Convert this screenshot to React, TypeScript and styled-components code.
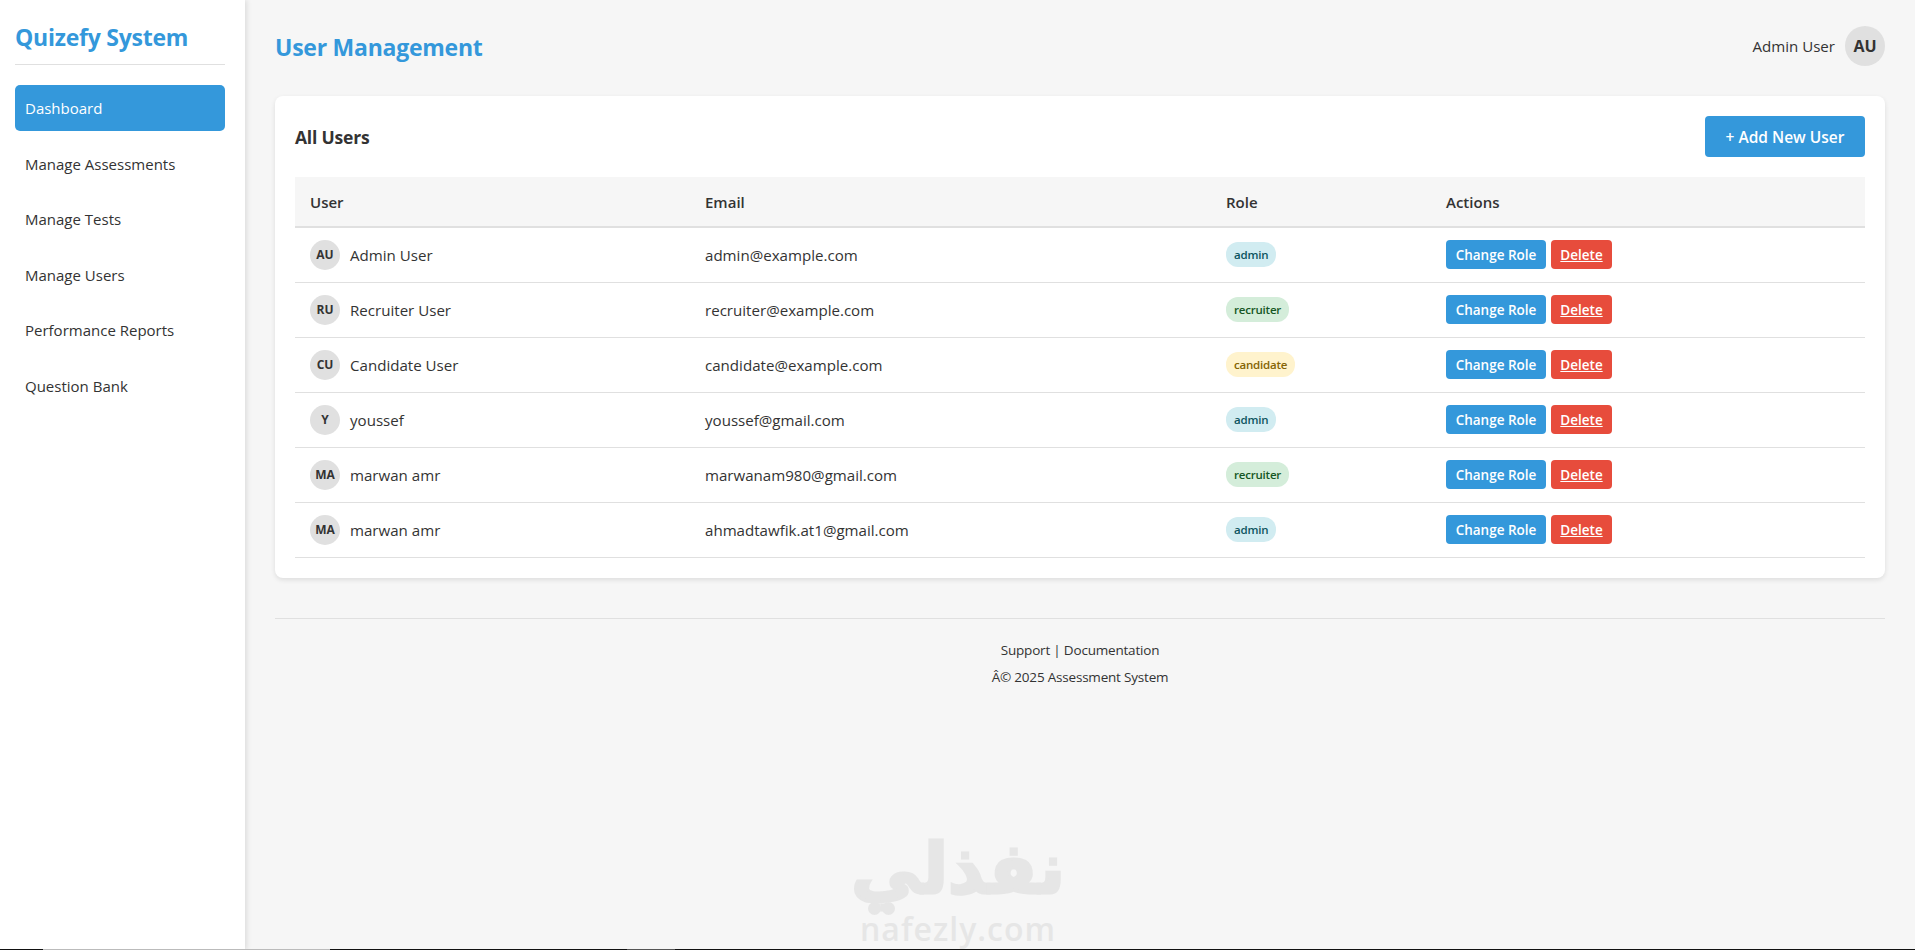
import { FC } from "react";
import styled, { createGlobalStyle } from "styled-components";

const GlobalStyle = createGlobalStyle`
  * {
    box-sizing: border-box;
  }
  html, body {
    margin: 0;
    padding: 0;
    height: 100%;
    overflow: hidden;
  }
  body {
    background: #f6f6f6;
    color: #333;
    font-family: "Open Sans", "Noto Sans", sans-serif;
  }
`;

const Page = styled.div`
  position: relative;
  display: flex;
  height: 950px;
  overflow: hidden;
`;

const Sidebar = styled.aside`
  flex: 0 0 245px;
  background: #fff;
  padding: 20px 20px 20px 15px;
  box-shadow: 2px 0 5px rgba(0, 0, 0, 0.1);
`;
const Logo = styled.div`
  height: 45px;
  margin-bottom: 20px;
  border-bottom: 1px solid #e0e0e0;
  color: #3498db;
  font-size: 23px;
  font-weight: 700;
  line-height: 34px;
  letter-spacing: -0.25px;
`;
const NavList = styled.nav`
  display: flex;
  flex-direction: column;
  gap: 9.6px;
`;
const NavItem = styled.a<{ $active?: boolean }>`
  display: flex;
  align-items: center;
  height: 46px;
  padding: 0 10px;
  border-radius: 5px;
  font-size: 15px;
  color: ${(p) => (p.$active ? "#fff" : "#333")};
  background: ${(p) => (p.$active ? "#3498db" : "transparent")};
`;

const Main = styled.main`
  flex: 1;
  padding: 26px 30px 0;
`;
const Header = styled.header`
  display: flex;
  align-items: center;
  justify-content: space-between;
  height: 40px;
  margin-bottom: 30px;
`;
const PageTitle = styled.h1`
  margin: 0;
  padding-top: 2px;
  color: #3498db;
  font-size: 23px;
  font-weight: 700;
  letter-spacing: -0.25px;
`;
const UserInfo = styled.div`
  display: flex;
  align-items: center;
  gap: 10px;
  font-size: 15.1px;
`;
const Avatar = styled.div<{ $size: number; $font: number }>`
  display: flex;
  align-items: center;
  justify-content: center;
  flex: 0 0 ${(p) => p.$size}px;
  width: ${(p) => p.$size}px;
  height: ${(p) => p.$size}px;
  border-radius: 50%;
  background: #e0e0e0;
  font-size: ${(p) => p.$font}px;
  font-weight: 700;
`;

const Card = styled.section`
  padding: 20px;
  background: #fff;
  border-radius: 8px;
  box-shadow: 0 2px 5px rgba(0, 0, 0, 0.1);
`;
const CardHeader = styled.div`
  display: flex;
  align-items: center;
  justify-content: space-between;
  height: 41px;
  margin-bottom: 20px;
`;
const CardTitle = styled.h2`
  margin: 0;
  font-size: 17.5px;
  font-weight: 700;
  letter-spacing: -0.2px;
`;
const AddButton = styled.button`
  width: 160px;
  height: 41px;
  padding: 0;
  border: none;
  border-radius: 4px;
  background: #3498db;
  color: #fff;
  font-family: inherit;
  font-size: 15.5px;
  font-weight: 600;
`;

const Table = styled.table`
  width: 100%;
  table-layout: fixed;
  border-collapse: collapse;
`;
const Th = styled.th<{ $width: number }>`
  width: ${(p) => p.$width}px;
  height: 50px;
  padding: 0 15px;
  background: #f6f6f6;
  border-bottom: 2px solid #e0e0e0;
  font-size: 15px;
  font-weight: 600;
  text-align: left;
`;
const Td = styled.td`
  height: 55px;
  padding: 0 15px;
  border-bottom: 1px solid #e0e0e0;
  font-size: 15.1px;
`;
const UserCell = styled.div`
  display: flex;
  align-items: center;
  gap: 10px;
`;

const roleColors = {
  admin: { bg: "#d1ecf1", fg: "#0c5460" },
  recruiter: { bg: "#d4edda", fg: "#155724" },
  candidate: { bg: "#fff3cd", fg: "#856404" },
};
type Role = keyof typeof roleColors;

const RoleBadge = styled.span<{ $role: Role }>`
  display: flex;
  align-items: center;
  width: fit-content;
  height: 25px;
  padding: 0 8px;
  border-radius: 12px;
  background: ${(p) => roleColors[p.$role].bg};
  color: ${(p) => roleColors[p.$role].fg};
  font-size: 11.5px;
  font-weight: 600;
  letter-spacing: -0.2px;
`;
const Actions = styled.div`
  display: flex;
  gap: 5px;
`;
const ActionButton = styled.a<{ $danger?: boolean }>`
  display: flex;
  align-items: center;
  justify-content: center;
  width: ${(p) => (p.$danger ? "61px" : "100px")};
  height: 29px;
  border-radius: 4px;
  background: ${(p) => (p.$danger ? "#e74c3c" : "#3498db")};
  color: #fff;
  font-size: 13.5px;
  font-weight: 600;
  text-decoration: ${(p) => (p.$danger ? "underline" : "none")};
`;

const Footer = styled.footer`
  margin-top: 40px;
  padding-top: 22px;
  border-top: 1px solid #e0e0e0;
  text-align: center;
  font-size: 13.5px;
  letter-spacing: -0.2px;
  p {
    margin: 0 0 8px;
    line-height: 19px;
  }
`;

const Watermark = styled.div`
  position: absolute;
  left: 838px;
  top: 836px;
  width: 240px;
  text-align: center;
  color: #e6e6e6;
  pointer-events: none;
`;
const WatermarkArabic = styled.div`
  font-family: "DejaVu Sans", sans-serif;
  font-size: 70px;
  font-weight: 700;
  line-height: 66px;
  -webkit-text-stroke: 3px #e6e6e6;
`;
const WatermarkDots = styled.div`
  display: flex;
  gap: 1px;
  width: 30px;
  margin: 0 0 -4px 30px;
  span {
    width: 13px;
    height: 13px;
    border-radius: 50%;
    background: #e6e6e6;
  }
`;
const WatermarkLatin = styled.div`
  font-family: "Open Sans", sans-serif;
  font-size: 32px;
  font-weight: 600;
  line-height: 36px;
  letter-spacing: 1px;
`;

// sits on the very last pixel row of the capture
const BottomStrip = styled.div`
  position: absolute;
  left: 0;
  right: 0;
  bottom: 0;
  height: 1px;
  background: linear-gradient(
    to right,
    #111 0 43px,
    #bbb 43px 330px,
    #111 330px 627px,
    #555 627px 675px,
    #111 675px
  );
`;

const users: { initials: string; name: string; email: string; role: Role }[] = [
  { initials: "AU", name: "Admin User", email: "admin@example.com", role: "admin" },
  { initials: "RU", name: "Recruiter User", email: "recruiter@example.com", role: "recruiter" },
  { initials: "CU", name: "Candidate User", email: "candidate@example.com", role: "candidate" },
  { initials: "Y", name: "youssef", email: "youssef@gmail.com", role: "admin" },
  { initials: "MA", name: "marwan amr", email: "marwanam980@gmail.com", role: "recruiter" },
  { initials: "MA", name: "marwan amr", email: "ahmadtawfik.at1@gmail.com", role: "admin" },
];

const navItems = [
  "Dashboard",
  "Manage Assessments",
  "Manage Tests",
  "Manage Users",
  "Performance Reports",
  "Question Bank",
];

const App: FC = () => {
  return (
    <>
      <GlobalStyle />
      <Page>
        <Sidebar>
          <Logo>Quizefy System</Logo>
          <NavList>
            {navItems.map((item, i) => (
              <NavItem key={item} $active={i === 0}>
                {item}
              </NavItem>
            ))}
          </NavList>
        </Sidebar>
        <Main>
          <Header>
            <PageTitle>User Management</PageTitle>
            <UserInfo>
              Admin User
              <Avatar $size={40} $font={16}>AU</Avatar>
            </UserInfo>
          </Header>
          <Card>
            <CardHeader>
              <CardTitle>All Users</CardTitle>
              <AddButton>+ Add New User</AddButton>
            </CardHeader>
            <Table>
              <thead>
                <tr>
                  <Th $width={395}>User</Th>
                  <Th $width={521}>Email</Th>
                  <Th $width={220}>Role</Th>
                  <Th $width={434}>Actions</Th>
                </tr>
              </thead>
              <tbody>
                {users.map((u) => (
                  <tr key={u.email}>
                    <Td>
                      <UserCell>
                        <Avatar $size={30} $font={12}>{u.initials}</Avatar>
                        {u.name}
                      </UserCell>
                    </Td>
                    <Td>{u.email}</Td>
                    <Td>
                      <RoleBadge $role={u.role}>{u.role}</RoleBadge>
                    </Td>
                    <Td>
                      <Actions>
                        <ActionButton>Change Role</ActionButton>
                        <ActionButton $danger>Delete</ActionButton>
                      </Actions>
                    </Td>
                  </tr>
                ))}
              </tbody>
            </Table>
          </Card>
          <Footer>
            <p>Support | Documentation</p>
            <p>Â© 2025 Assessment System</p>
          </Footer>
        </Main>
        <Watermark>
          <WatermarkArabic>نفذلي</WatermarkArabic>
          <WatermarkDots>
            <span />
            <span />
          </WatermarkDots>
          <WatermarkLatin>nafezly.com</WatermarkLatin>
        </Watermark>
        <BottomStrip />
      </Page>
    </>
  );
};

export default App;
